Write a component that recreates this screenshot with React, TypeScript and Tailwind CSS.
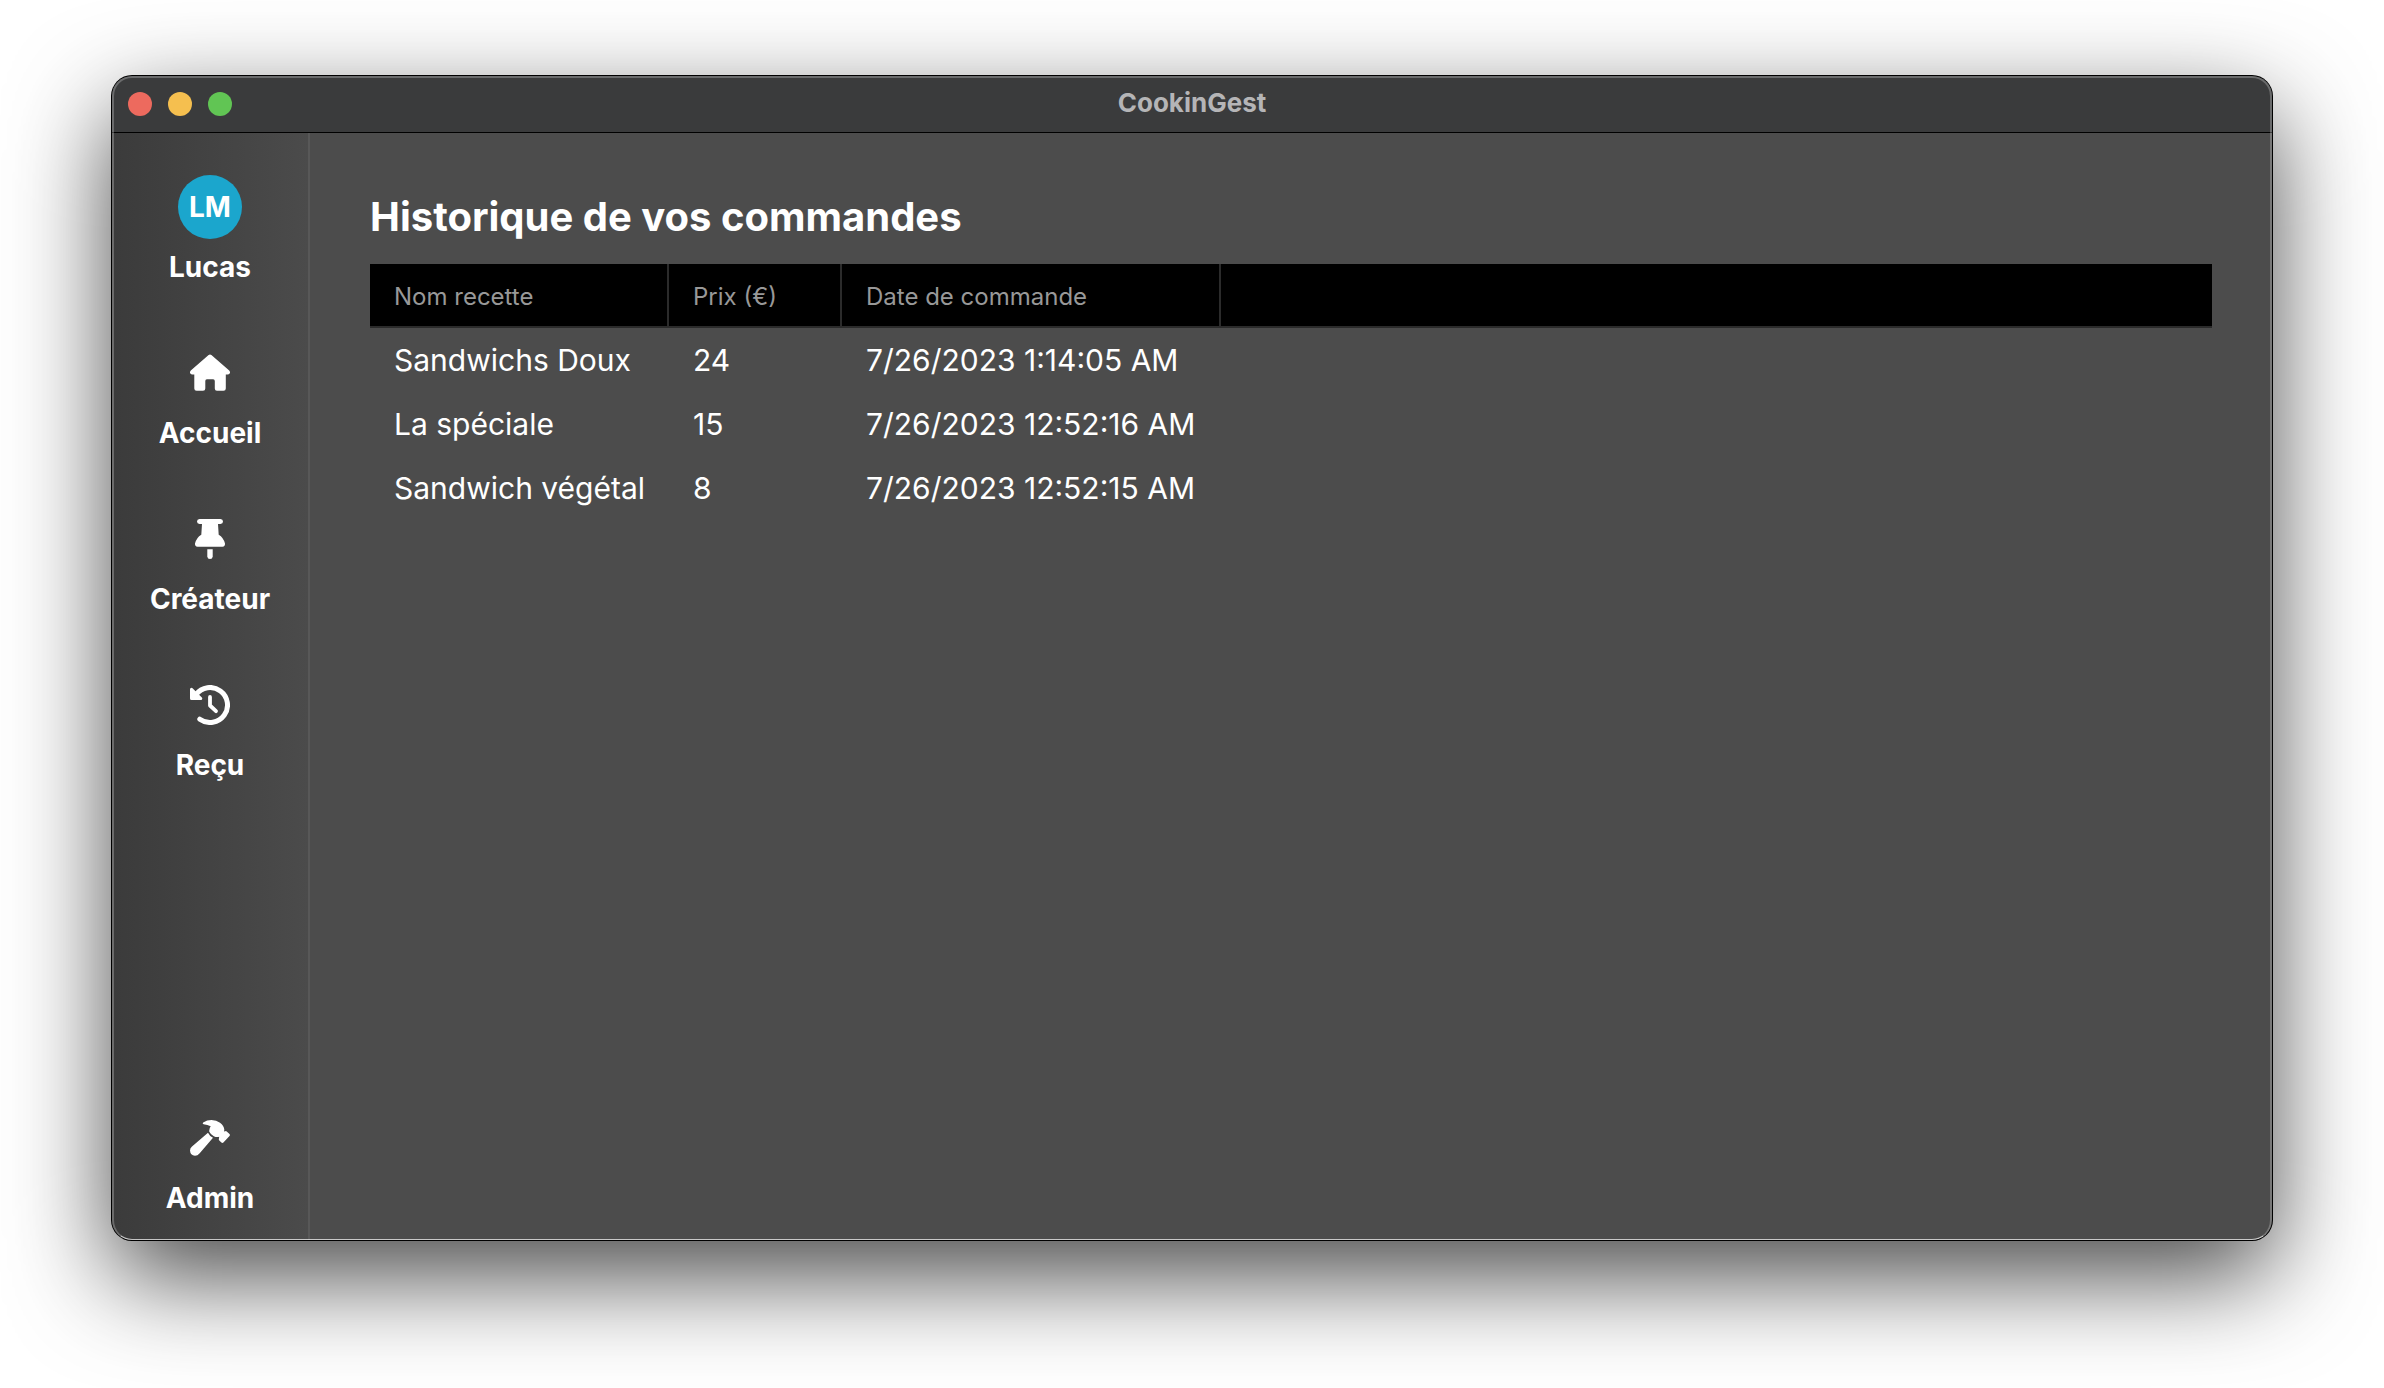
import type { ReactNode } from "react";

const iconClass = "size-10";

function HomeIcon() {
  return (
    <svg viewBox="0 0 40 40" className={iconClass} fill="currentColor" aria-hidden="true">
      <path d="M18.6 2Q20 1 21.4 2L39.2 17.6Q40.6 19.2 39.6 20.6Q39 21.5 37.6 21.5H35.8V35.4Q35.8 37.7 33.5 37.7H27Q24.8 37.7 24.8 35.4V28Q24.8 26.3 23.1 26.3H16.9Q15.3 26.3 15.3 28V35.4Q15.3 37.7 13 37.7H6.6Q4.3 37.7 4.3 35.4V21.5H2.4Q1 21.5 .4 20.6Q-.6 19.2 .8 17.6Z" />
    </svg>
  );
}

function PinIcon() {
  return (
    <svg viewBox="0 0 40 40" className={iconClass} fill="currentColor" aria-hidden="true">
      <path d="M9.5 0H30.5Q33 .2 33 2.5T30.5 5H28L28.7 15.8Q33.5 18.6 35 24.6Q35.3 27.7 32.4 27.7H7.6Q4.7 27.7 5 24.6Q6.5 18.6 11.3 15.8L12 5H9.5Q7 4.8 7 2.5T9.5 0Z" />
      <path d="M17.3 30.2H22.7V37.5Q22.5 40 20 40T17.3 37.5Z" />
    </svg>
  );
}

function HistoryIcon() {
  return (
    <svg
      viewBox="0 0 40 40"
      className={iconClass}
      fill="none"
      stroke="currentColor"
      strokeLinecap="round"
      strokeLinejoin="round"
      aria-hidden="true"
    >
      <path d="M6 9.5A17.5 17.5 0 1 1 9.8 34.2" strokeWidth="5" />
      <path d="M20 12V20.5L26 26.2" strokeWidth="3.8" />
      <path d="M1.5 4.3V13.5H10.8Z" strokeWidth="3" fill="currentColor" />
    </svg>
  );
}

function HammerIcon() {
  return (
    <svg viewBox="0 0 40 40" className={iconClass} fill="currentColor" aria-hidden="true">
      <path d="M13.2 4.4Q17 2 21.5 2Q26.5 2 30 4.7Q34 7.8 34.3 11.5L34.1 13.4L35.3 13.2Q36.2 12.9 37 13.7L39.5 16Q40.3 17 39.5 18L33.4 24.6Q32.4 25.4 31.4 24.6L29.3 22.5Q28.6 21.7 28.9 20.7L29.2 18.8Q26.5 19.6 23.8 18.2Q20.6 16.5 19.3 13.8Q18.8 11 20.7 8.3Q17.5 6.6 13.6 6.3Q12 5.5 13.2 4.4Z" />
      <path d="M18 14.7Q19.5 18 23 19.8L9.7 35.2Q7.5 37.7 5 37.7Q.3 37.3 0 32.5Q0 30.2 2 28.5Z" />
    </svg>
  );
}

function NavItem({ icon, label }: { icon: ReactNode; label: string }) {
  return (
    <button type="button" className="flex flex-col items-center gap-2 text-[28px] leading-10 font-bold">
      <span className="flex size-16 items-center justify-center">{icon}</span>
      {label}
    </button>
  );
}

const orders = [
  { name: "Sandwichs Doux", price: 24, date: "7/26/2023 1:14:05 AM" },
  { name: "La spéciale", price: 15, date: "7/26/2023 12:52:16 AM" },
  { name: "Sandwich végétal", price: 8, date: "7/26/2023 12:52:15 AM" },
];

function OrdersTable() {
  const head = "border-r-2 border-b-2 border-[#2b2b2b] px-6 pt-1 font-normal";
  return (
    <table className="w-full table-fixed border-separate border-spacing-0 text-left whitespace-nowrap">
      <colgroup>
        <col className="w-[299px]" />
        <col className="w-[173px]" />
        <col className="w-[379px]" />
        <col />
      </colgroup>
      <thead className="bg-black text-2xl text-[#989898]">
        <tr className="h-16">
          <th scope="col" className={head}>Nom recette</th>
          <th scope="col" className={head}>Prix (€)</th>
          <th scope="col" className={head}>Date de commande</th>
          <td className="border-b-2 border-[#2b2b2b]" />
        </tr>
      </thead>
      <tbody className="text-[30px]">
        {orders.map((order) => (
          <tr key={order.date} className="h-16">
            <td className="px-6">{order.name}</td>
            <td className="px-6">{order.price}</td>
            <td className="px-6">{order.date}</td>
            <td />
          </tr>
        ))}
      </tbody>
    </table>
  );
}

export default function App() {
  return (
    <div className="flex min-h-screen bg-white px-28 pt-19 pb-37 font-['Inter','Liberation_Sans',sans-serif] text-white">
      <div className="relative flex flex-1 flex-col overflow-hidden rounded-[20px] bg-[#4c4c4c] shadow-[0_0_0_1px_#000,0_36px_100px_rgba(0,0,0,0.72)]">
        <header className="grid h-14 grid-cols-[1fr_auto_1fr] items-center bg-[#3a3b3c] px-4">
          <div className="flex gap-4">
            <button type="button" aria-label="Fermer" className="size-6 rounded-full bg-[#ed6a5e]" />
            <button type="button" aria-label="Réduire" className="size-6 rounded-full bg-[#f5bf4f]" />
            <button type="button" aria-label="Agrandir" className="size-6 rounded-full bg-[#61c554]" />
          </div>
          <h1 className="pb-0.5 text-[26px] leading-8 font-bold text-[#b5b5b7]">CookinGest</h1>
        </header>

        <div className="flex flex-1 border-t border-black">
          <nav className="flex w-[198px] flex-col items-center justify-between border-r-2 border-[#585858] bg-linear-to-r from-[#3b3b3b] to-[#4b4b4b] pt-[42px] pb-[22px]">
            <div className="flex flex-col items-center gap-[54px]">
              <NavItem
                label="Lucas"
                icon={
                  <span className="flex size-16 items-center justify-center rounded-full bg-[#1ba6cd]">LM</span>
                }
              />
              <NavItem label="Accueil" icon={<HomeIcon />} />
              <NavItem label="Créateur" icon={<PinIcon />} />
              <NavItem label="Reçu" icon={<HistoryIcon />} />
            </div>
            <NavItem label="Admin" icon={<HammerIcon />} />
          </nav>

          <main className="flex-1 px-15 pt-15">
            <h2 className="mb-[23px] text-[40px] leading-12 font-bold">Historique de vos commandes</h2>
            <OrdersTable />
          </main>
        </div>

        <div className="pointer-events-none absolute inset-0 rounded-[20px] border-2 border-b border-white/25 border-b-white/70" />
      </div>
    </div>
  );
}
